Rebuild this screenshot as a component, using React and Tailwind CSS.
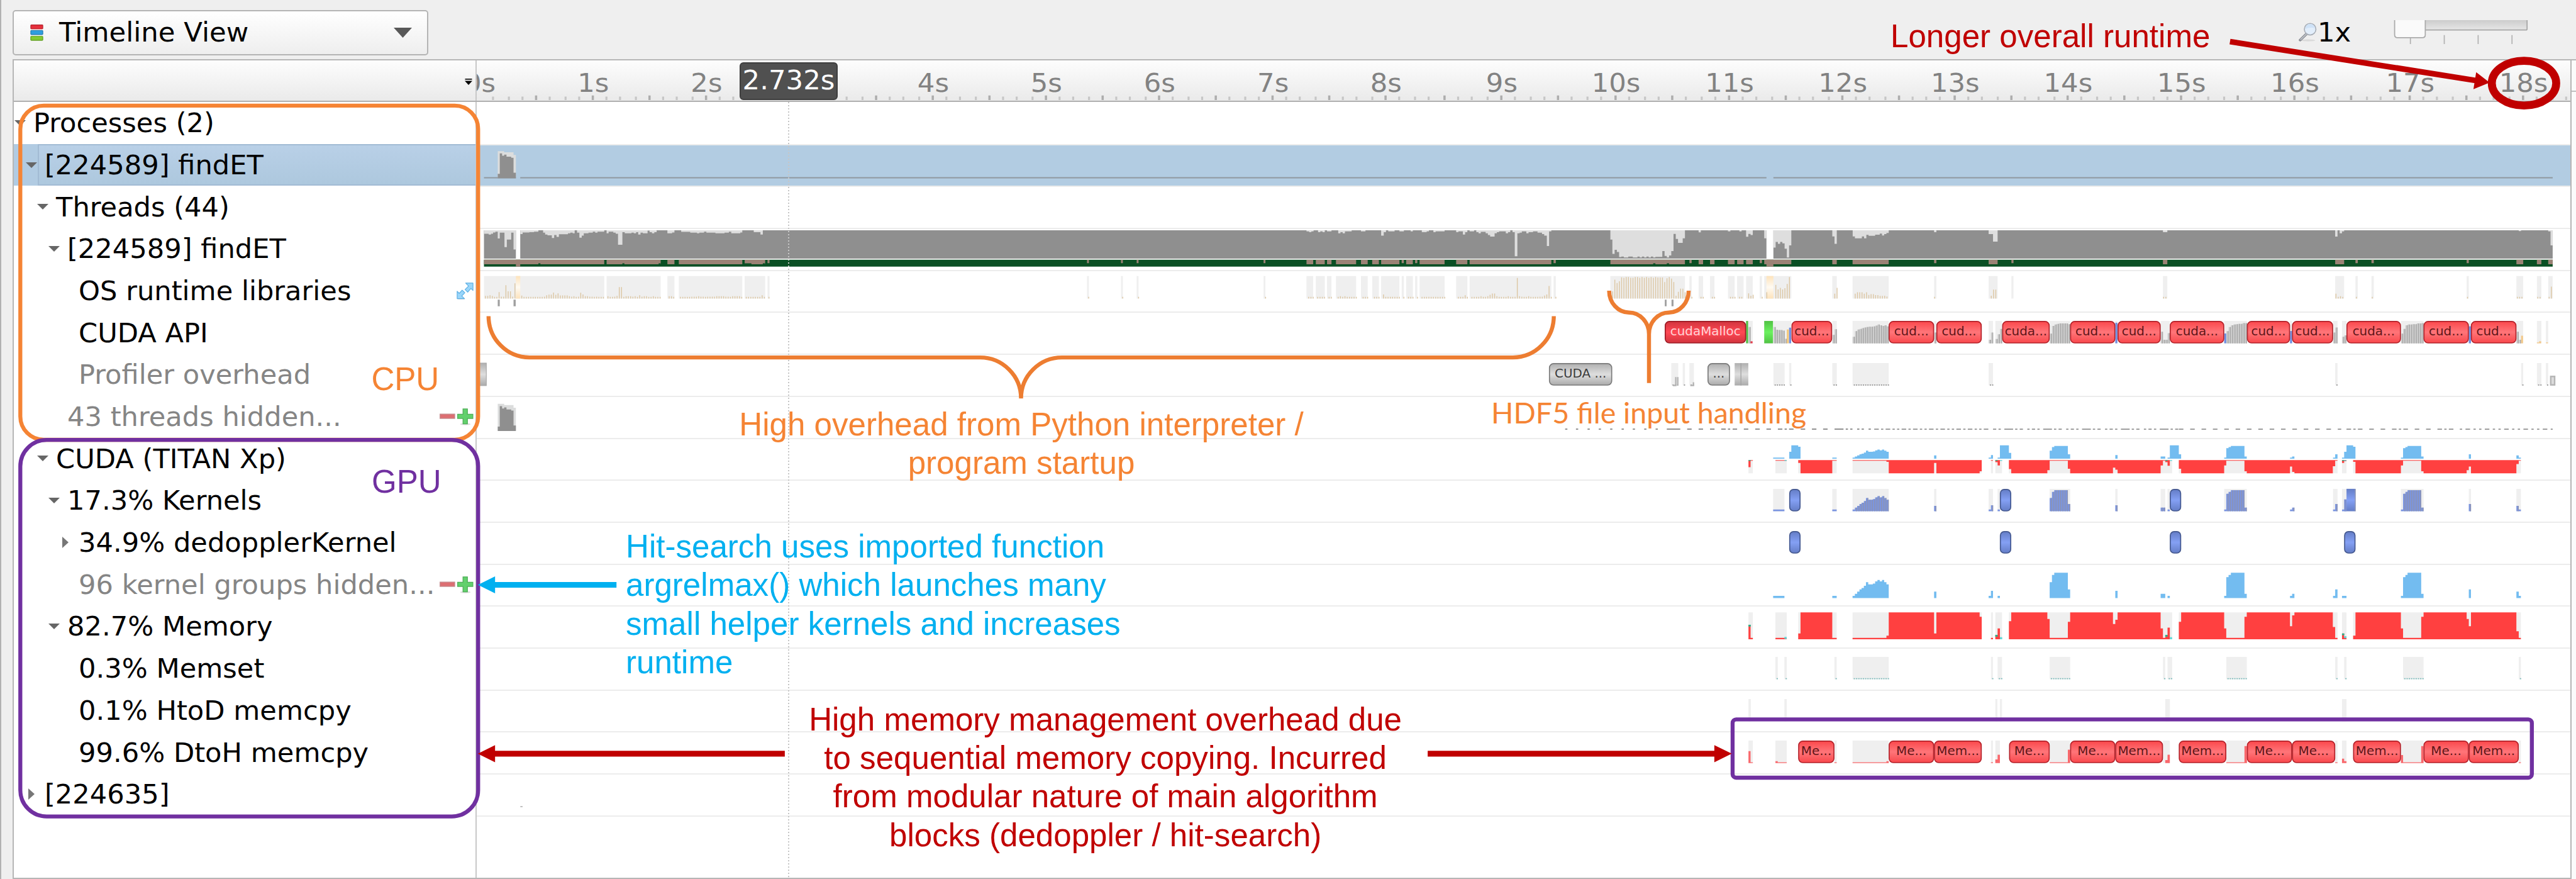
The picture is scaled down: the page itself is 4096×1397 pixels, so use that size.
import React from "react";

const ROW_H = 71.65;
const X0 = 814;
const TRACK_W = 3577.5;
const CELL = 3.875;

/* The capture is stored in sections; each one has its own origin and resolution. */
const A = (v) => 800 + v / 1.742;
const B = (v) => 1700 + v / 1.568;
const C = (v) => 2600 + v / 2.6133;
const D = (v) => 2900 + v / 2.8;
const E = (v) => 3400 + v / 2.8;
const F = (v) => 3900 + v / 3;

/* [start, level, start, level, ..., end] -> [{x0, x1, v}] with v in 0..1 */
const steps = (map, top, span, flat) => {
  const out = [];
  for (let i = 0; i + 2 < flat.length; i += 2) {
    if (flat[i + 1] === null) continue;
    out.push({ x0: map(flat[i]), x1: map(flat[i + 2]), v: (flat[i + 1] - top) / span });
  }
  return out;
};
const ranges = (map, flat) => {
  const out = [];
  for (let i = 0; i < flat.length; i += 2) out.push([map(flat[i]), map(flat[i + 1])]);
  return out;
};

/* Idle share of the main thread */
const idle = [
  ...steps(A, 702, 108, [46, 715, 60, 718, 67, 715, 73, 710, 80, 707, 87, 733, 93, 711, 107, 766, 114, 737, 127, 711, 134, 775, 141, null, 154, 716, 161, 710, 181, 709, 195, 707, 208, 702, 222, 711, 228, 718, 235, 721, 248, 731, 255, 720, 262, 727, 269, 717, 296, 713, 303, 711, 310, 713, 316, 702, 323, 711, 330, 730, 337, 722, 343, 713, 357, 711, 370, 707, 377, 711, 384, 707, 404, 702, 411, 713, 417, 707, 431, 711, 438, 715, 445, 757, 458, 709, 465, 713, 485, 711, 492, 713, 499, 709, 505, 718, 512, 711, 519, 713, 533, 703, 539, 709, 546, 713, 553, 709, 560, 702, 592, 713, 606, 710, 613, 702, 633, 708, 660, 711, 680, 713, 687, 711, 701, 707, 708, 711, 735, 713, 762, 711, 775, 707, 782, 713, 809, 710, 815, 702, 849, 709, 869, 718, 876, 702, 1567.8]),
  ...steps(B, 702, 108, [0, 702, 834, 706, 841, 709, 847, 706, 853, 702, 865, 709, 871, 706, 877, 709, 883, 702, 889, 706, 901, 702, 919, 713, 925, 709, 931, 713, 937, 706, 955, 702, 980, 706, 992, 702, 1034, 722, 1041, 709, 1047, 702, 1053, 706, 1070, 702, 1083, 706, 1095, 702, 1113, 706, 1119, 702, 1143, 709, 1156, 706, 1162, 702, 1174, 709, 1180, 706, 1204, 702, 1235, 709, 1241, 706, 1253, 718, 1259, 709, 1265, 702, 1271, 706, 1283, 702, 1289, 709, 1295, 713, 1301, 708, 1314, 713, 1320, 720, 1326, 726, 1338, 713, 1344, 709, 1350, 706, 1368, 713, 1374, 709, 1380, 702, 1386, 709, 1392, 801, 1399, 713, 1405, 711, 1411, 706, 1423, 713, 1429, 709, 1441, 706, 1453, 711, 1465, 716, 1471, 722, 1478, 762, 1484, 706, 1490, 702, 1568]),
  ...steps(C, 99, 145, [261.3, 99, 395, 146, 404, 220, 414, 199, 424, 210, 434, 236, 444, 233, 455, 238, 475, 233, 495, 238, 516, 233, 526, 238, 536, 233, 546, 238, 556, 233, 566, 238, 576, 233, 586, 238, 596, 235, 627, 205, 637, 230, 647, 238, 657, 228, 667, 205, 677, 117, 687, 143, 697, 163, 718, 140, 728, 99, 789, 109, 799, 99, 920, 104, 931, 99, 971, 104, 981, 99, 1001, 132, 1011, 117, 1021, 123, 1031, 99, 1082, 140, 1092, null, 1123, 187, 1133, 158, 1143, 168, 1153, 158, 1163, 166, 1173, 193, 1183, 238, 1193, 176, 1203, 99, 1386, 130, 1396, 168, 1406, 99, 1477, 130, 1487, 140, 1518, 130, 1528, 140, 1538, 122, 1548, 127, 1568]),
  ...steps(D, 55, 77.5, [840, 70, 850, 67, 872, 64, 883, 69, 893, 65, 904, 62, 915, 55, 1132, 60, 1143, 55, 1393, 65, 1414, 86, 1436, 55, 1568]),
  ...steps(E, 55, 77.5, [168, 55, 827, 60, 848, 55, 1568]),
  ...steps(F, 55, 77.5, [180, 55, 269, 72, 281, 55, 292, 63, 304, 58, 315, 55, 1210, 57, 1222, 55, 1361, 58, 1373, 96, 1384]),
];

const LEFT_EDGE = A(46);
const RIGHT_EDGE = F(1384);
const GAPS = [[A(141), A(154)], [C(1092), C(1123)]];

/* Spans in which OS runtime calls were recorded */
const osSpans = [
  ...ranges(A, [46, 404, 411, 572, 592, 613, 626, 815, 822, 883, 890, 896]),
  ...ranges(B, [246, 251, 337, 342, 379, 384, 719, 724, 834, 852, 859, 883, 889, 901, 913, 967, 980, 998, 1010, 1028, 1034, 1083, 1089, 1095, 1101, 1119, 1125, 1131, 1137, 1204, 1235, 1265, 1271, 1490, 1496, 1502]),
  ...ranges(C, [395, 728, 748, 758, 789, 809, 840, 860, 920, 950, 961, 990, 1001, 1031, 1062, 1072, 1082, 1203, 1386, 1406]),
  ...ranges(D, [742, 915, 1132, 1143, 1393, 1436, 1502, 1512]),
  ...ranges(E, [827, 848]),
  ...ranges(F, [269, 315, 373, 385, 455, 467, 943, 954, 1198, 1233, 1303, 1326, 1361, 1384]),
];

/* GPU load of the helper kernels, and of dedopplerKernel */
const kernelLoad = [
  ...steps(D, 690, -37, [362, 687, 416, null, 645, 687, 666, null, 742, 687, 753, 684, 764, 681, 775, 678, 785, 676, 796, 673, 806, 668, 817, 671, 839, 670, 850, 667, 861, 665, 872, 667, 883, 665, 893, 668, 904, 671, 915, null, 1132, 681, 1143, null, 1393, 687, 1404, 680, 1414, null, 1436, 687, 1447]),
  ...steps(E, 690, -37, [285, 668, 296, 658, 307, 655, 372, 678, 383, null, 599, 680, 610, null, 816, 684, 838, null, 849, 687, 860, null, 1120, 687, 1130, 661, 1141, 658, 1152, 655, 1217, 684, 1228, null, 1435, 687, 1445, 684, 1456]),
  ...steps(F, 690, -37, [258, 687, 269, 678, 281, null, 304, 687, 327, null, 606, 687, 617, 661, 629, 658, 640, 655, 710, 684, 722, null, 954, 678, 965, null, 1198, 681, 1210, 687, 1221]),
];
const dedopplerLoad = [
  ...steps(D, 690, -37, [439, 671, 449, 653, 482, 657, 493, null, 1447, 653, 1490, 674, 1501]),
  ...steps(E, 690, -37, [860, 653, 903, 678, 914]),
  ...steps(F, 690, -37, [315, 671, 327, 653, 361, 657, 373]),
];
const kernelSpans = [
  ...ranges(D, [362, 416, 645, 666, 742, 915, 1132, 1143, 1393, 1414, 1436, 1447]),
  ...ranges(E, [285, 383, 599, 610, 816, 838, 849, 860, 1120, 1228]),
  ...ranges(F, [258, 281, 304, 327, 606, 722, 954, 965, 1198, 1221]),
];

const memoryLoad = [
  ...steps(D, 694, 37, [244, 714, 254, 696, 265, null, 373, 696, 427, null, 482, 702, 493, 731, 645, 696, 666, null, 742, 696, 904, 699, 915, 731, 1132, 702, 1143, 731, 1350, 725, 1360, null, 1404, 696, 1414, null, 1425, 700, 1436, 709, 1447, null, 1490, 719, 1501]),
  ...steps(E, 694, 37, [101, 731, 274, 722, 285, 696, 372, 718, 383, 731, 588, 715, 599, 721, 610, 731, 816, 709, 827, 696, 838, 700, 849, 710, 860, null, 903, 718, 914, 731, 1120, 709, 1130, 696, 1217, 725, 1228, 731, 1435, 712, 1445, 727, 1456, 731, 1568]),
  ...steps(F, 694, 37, [180, 731, 257, 711, 269, 696, 281, null, 304, 702, 315, 697, 327, null, 361, 699, 373, 731, 606, 709, 617, 696, 710, 725, 722, 731, 943, 722, 954, 712, 965, 731, 1198, 705, 1210, 696, 1221]),
];
const memorySpans = [
  ...ranges(D, [244, 265, 373, 427, 482, 493, 645, 666, 742, 915, 1132, 1143, 1350, 1360, 1404, 1414, 1425, 1457, 1490, 1501]),
  ...ranges(E, [274, 383, 588, 610, 816, 871, 903, 914, 1120, 1228, 1435, 1456]),
  ...ranges(F, [257, 281, 304, 327, 361, 373, 606, 722, 943, 965, 1198, 1221]),
];
const hostCopyTicks = [
  [D(244), 1], [D(416), 0], [D(1425), 1], [D(1447), 0], [E(838), 1], [E(860), 0], [F(304), 1], [F(315), 0],
];

const apiSpans = [
  ...ranges(C, [1001, 1031, 1082, 1203, 1386, 1406]),
  ...ranges(D, [742, 915, 1132, 1143, 1393, 1414, 1425, 1457]),
  ...ranges(E, [285, 383, 599, 609, 816, 860, 1120, 1229, 1435, 1445]),
  ...ranges(F, [258, 281, 304, 327, 606, 722, 954, 965, 1198, 1233, 1303, 1326, 1349, 1361]),
];
const apiBars = [
  ...steps(C, 680, -115, [1011, 596, 1021, null, 1123, 596, 1133, 610, 1143, 612, 1163, 615, 1173, 657, 1183, null, 1386, 637, 1396, 608, 1406]),
  ...steps(D, 370, -62, [742, 352, 753, 336, 764, 332, 775, 330, 785, 328, 796, 326, 806, 325, 817, 324, 839, 323, 850, 321, 861, 318, 872, 320, 883, 322, 893, 320, 904, 323, 915, null, 1132, 340, 1143, null, 1393, 360, 1404, 340, 1414, null, 1425, 358, 1436, 345, 1447, 330, 1457]),
  ...steps(E, 370, -62, [285, 343, 296, 322, 307, 318, 318, 316, 329, 315, 372, 317, 383, null, 816, 338, 827, 360, 849, 342, 860, null, 1130, 336, 1141, 325, 1152, 320, 1163, 318, 1174, 317, 1185, 316, 1207, 314, 1229]),
  ...steps(F, 370, -62, [258, 340, 269, 326, 281, null, 304, 352, 315, 348, 327, null, 606, 343, 617, 330, 629, 320, 640, 318, 664, 317, 687, 315, 710, 314, 722, null, 1198, 338, 1210, 360, 1222]),
];
const apiMarks = [
  { x0: C(1001), x1: C(1010), v: 1, c: "#4fc044" },
  { x0: C(1021), x1: C(1030), v: 0.09, c: "#e23b4a" },
  { x0: C(1183), x1: C(1192), v: 0.62, c: "#f6c877" },
  { x0: C(1193), x1: C(1202), v: 0.7, c: "#6f8fe0" },
  { x0: E(599), x1: E(609), v: 0.92, c: "#6f8fe0" },
  { x0: E(1120), x1: E(1130), v: 0.44, c: "#6f8fe0" },
  { x0: E(1435), x1: E(1445), v: 0.55, c: "#6f8fe0" },
  { x0: F(954), x1: F(965), v: 0.76, c: "#6f8fe0" },
  { x0: F(1222), x1: F(1232), v: 0.34, c: "#f3c98a" },
  { x0: F(1303), x1: F(1314), v: 0.04, c: "#f3c98a" },
  { x0: F(1314), x1: F(1325), v: 0.09, c: "#f3c98a" },
  { x0: F(1350), x1: F(1360), v: 0.04, c: "#f3c98a" },
];
const apiCalls = [
  [C(1204), C(1385), "cud..."],
  [D(915), D(1132), "cud..."],
  [D(1143), D(1360), "cud..."],
  [E(58), E(285), "cuda..."],
  [E(383), E(599), "cud..."],
  [E(610), E(816), "cud..."],
  [E(860), E(1120), "cuda..."],
  [E(1229), E(1435), "cud..."],
  [F(48), F(258), "cud..."],
  [F(327), F(606), "cuda..."],
  [F(722), F(954), "cud..."],
  [F(965), F(1198), "cud..."],
];

const overheadSpans = [
  ...ranges(C, [667, 698, 718, 728, 748, 768, 1123, 1173, 1193, 1203, 1386, 1406]),
  ...ranges(D, [742, 915, 1393, 1414]),
  ...ranges(F, [269, 281, 1222, 1233, 1303, 1326, 1349, 1361]),
];
const memsetSpans = [
  ...ranges(D, [373, 384, 416, 427, 655, 666, 742, 915, 1404, 1414, 1436, 1457]),
  ...ranges(E, [285, 383, 827, 838, 849, 871, 1130, 1228]),
  ...ranges(F, [269, 281, 315, 327, 617, 722, 1210, 1221]),
];
const dtohSpans = [
  ...ranges(D, [244, 265, 373, 427, 655, 666, 742, 915, 1404, 1414, 1425, 1447]),
  ...ranges(E, [285, 383, 827, 860, 1130, 1229]),
  ...ranges(F, [269, 281, 304, 327, 606, 722, 1210, 1221]),
];
const dtohBars = [
  ...steps(D, 1540, -62, [244, 1507, 254, 1538, 265, null, 373, 1535, 384, 1538, 427, null, 655, 1538, 666, null, 742, 1538, 904, 1535, 915, null, 1404, 1538, 1414, null, 1425, 1530, 1436, 1517, 1447]),
  ...steps(E, 1540, -62, [285, 1538, 372, 1503, 383, null, 838, 1532, 849, 1517, 860, null, 1130, 1538, 1217, 1493, 1229]),
  ...steps(F, 1540, -62, [269, 1538, 281, null, 304, 1528, 315, 1535, 327, null, 606, 1518, 617, 1538, 710, 1493, 722, null, 1210, 1538, 1221]),
];
const dtohCopies = [
  [D(482), D(655), "Me..."],
  [D(915), D(1132), "Me..."],
  [D(1132), D(1360), "Mem..."],
  [E(91), E(285), "Me..."],
  [E(383), E(599), "Me..."],
  [E(599), E(827), "Mem..."],
  [E(903), E(1130), "Mem..."],
  [E(1229), E(1445), "Me..."],
  [F(48), F(269), "Me..."],
  [F(361), F(606), "Mem..."],
  [F(722), F(954), "Me..."],
  [F(954), F(1210), "Mem..."],
];

const up = (list, base, h) =>
  list.map((s) => `M${s.x0.toFixed(2)} ${base}V${(base - s.v * h).toFixed(2)}H${s.x1.toFixed(2)}V${base}Z`).join("");
const down = (list, base, h) =>
  list.map((s) => `M${s.x0.toFixed(2)} ${base}V${(base + s.v * h).toFixed(2)}H${s.x1.toFixed(2)}V${base}Z`).join("");
const slab = (list, y0, y1) =>
  list.map(([a, b]) => `M${a.toFixed(2)} ${y0}H${b.toFixed(2)}V${y1}H${a.toFixed(2)}Z`).join("");
const cells = (list, base, h, minH = 0) => {
  let d = "";
  list.forEach((s) => {
    for (let x = s.x0; x < s.x1 - 1; x += CELL) {
      d += `M${(x + CELL - 0.8).toFixed(2)} ${base}V${(base - Math.max(minH, s.v * h)).toFixed(2)}`;
    }
  });
  return d;
};
const spanCells = (spans) => spans.map(([x0, x1]) => ({ x0, x1, v: 0 }));

const Track = ({ children }) => (
  <svg className="block h-full w-full" viewBox={`${X0} 0 ${TRACK_W} ${ROW_H}`} preserveAspectRatio="none">
    {children}
  </svg>
);

const Slabs = ({ spans, y0 = 16, y1 = 54.3, fill = "#efefef" }) => <path d={slab(spans, y0, y1)} fill={fill} />;

const Pill = ({ x0, x1, label, fill = "url(#redPill)", stroke = "#b3222a", text = "#5e1518", y = 16.3, h = 38.2, r = 7 }) => (
  <g>
    <rect x={x0 + 0.8} y={y + 0.8} width={x1 - x0 - 1.6} height={h - 1.6} rx={r} fill={fill} stroke={stroke} strokeWidth="1.8" />
    {label && (
      <text x={(x0 + x1) / 2} y={y + 24.8} textAnchor="middle" fontSize="21.4" fill={text} fontFamily="'DejaVu Sans', sans-serif">
        {label}
      </text>
    )}
  </g>
);

const Blobs = ({ spans }) =>
  spans.map(([a, b]) => <Pill key={a} x0={a} x1={b} fill="url(#bluePill)" stroke="#44588f" r={6.5} />);

const burst = (dy) => (
  <g>
    <path d={`M${A(87)} ${57.3 + dy}V${12 + dy}H${A(106)}V${14 + dy}H${A(134)}V${18.5 + dy}H${A(141)}V${57.3 + dy}Z`} fill="#dcdddd" />
    <path
      d={`M${A(87)} ${58.4 + dy}V${50.8 + dy}H${A(93)}V${15.8 + dy}H${A(100)}V${20 + dy}H${A(106)}V${18 + dy}H${A(113)}V${21.5 + dy}H${A(127)}V${23.5 + dy}H${A(134)}V${49 + dy}H${A(141)}V${58.4 + dy}Z`}
      fill="#8f8f8f"
    />
  </g>
);

const ProcessTrack = () => (
  <Track>
    <path d={`M${LEFT_EDGE} 57.4H${A(141)}M${A(154)} 57.4H${C(1092)}M${C(1123)} 57.4H${RIGHT_EDGE}`} stroke="#8f989f" strokeWidth="2.2" />
    {burst(0)}
  </Track>
);

const ThreadTrack = () => {
  const top = 4.4;
  const full = 48.3;
  const [g1, g2] = GAPS;
  return (
    <Track>
      <path d={slab([[LEFT_EDGE, g1[0]], [g1[1], g2[0]], [g2[1], RIGHT_EDGE]], top, top + full)} fill="#8f8f8f" />
      <path d={down(idle.filter((s) => s.v > 0), top, full)} fill="#dedede" />
      <path d={slab([[LEFT_EDGE, RIGHT_EDGE]], 54.6, 66.3)} fill="#0a4f24" />
      <path d={slab(osSpans.filter(([a, b]) => b - a > 5), 54.6, 62.4)} fill="#9b8275" />
      <path d={slab(osSpans.filter(([a, b]) => b - a <= 5), 54.6, 60.4)} fill="#9b8275" />
      <path d={slab(GAPS, 54.6, 66.3)} fill="#9b8275" />
      <path d={slab([[A(208), A(214)], [A(458), A(464)], [A(566), A(572)], [A(822), A(842)], [A(876), A(883)], [C(586), C(596)], [C(647), C(657)]], 60.6, 62.6)} fill="#0a4f24" />
    </Track>
  );
};

const osSpikes = () => {
  let d = "";
  for (let x = LEFT_EDGE; x < RIGHT_EDGE; x += CELL) {
    const m = x + CELL / 2;
    if (!osSpans.some(([a, b]) => m > a && m < b)) continue;
    if (GAPS.some(([a, b]) => m > a && m < b)) continue;
    const s = idle.find((p) => m >= p.x0 && m < p.x1);
    const h = Math.max(3, (s ? s.v : 0) * 38.5);
    d += `M${(x + 2.6).toFixed(2)} 48.9V${(48.9 - h).toFixed(2)}`;
  }
  return d;
};

const OsTrack = () => (
  <Track>
    <Slabs spans={osSpans} y0={10.4} y1={48.9} />
    {GAPS.map(([a, b]) => (
      <rect key={a} x={a} y="10.4" width={b - a} height="38.5" fill="url(#sandCell)" />
    ))}
    <path d={osSpikes()} stroke="#dcc6a2" strokeWidth="1.5" />
    <path d={slab([[A(87), A(93)], [A(134), A(140.5)], [C(638), C(646)], [C(668), C(677)]], 50.7, 62)} fill="#a0a0a0" />
  </Track>
);

const ApiTrack = () => (
  <Track>
    <Slabs spans={apiSpans} />
    <path d={up(apiBars, 54.4, 38.2)} fill="#cfcfcf" />
    <path d={cells(apiBars, 54.4, 38.2)} stroke="#a9a9a9" strokeWidth="1.7" />
    {apiMarks.map((m) => (
      <rect key={m.x0} x={m.x0} width={m.x1 - m.x0} y={54.4 - m.v * 38.2} height={m.v * 38.2} fill={m.c} />
    ))}
    <rect x={C(1082)} y="16.2" width={C(1121) - C(1082)} height="38.2" fill="url(#greenCell)" />
    <Pill x0={C(638)} x1={C(1001)} label="cudaMalloc" fill="url(#crimsonPill)" stroke="#9c1a24" text="#ffd3d6" />
    {apiCalls.map(([a, b, t]) => (
      <Pill key={a} x0={a} x1={b} label={t} />
    ))}
  </Track>
);

const OverheadTrack = () => (
  <Track>
    <Slabs spans={overheadSpans} />
    <path d={cells(spanCells(overheadSpans), 54.6, 0, 2)} stroke="#8f8f8f" strokeWidth="2" />
    <rect x={X0} y="16.2" width={A(53) - X0} height="38.4" fill="url(#greyPill)" stroke="#a6a6a6" strokeWidth="1.2" />
    <path d={`M${C(687)} 40V54.4H${C(674)}M${C(696)} 40V54.4M${C(766)} 49V54.4H${C(752)}`} stroke="#b3b3b3" strokeWidth="2.4" fill="none" />
    <Pill x0={C(121)} x1={C(403)} label="CUDA ..." fill="url(#greyPill)" stroke="#7a7a7a" text="#3b3b3b" />
    <Pill x0={C(829)} x1={C(929)} label="..." fill="url(#greyPill)" stroke="#7a7a7a" text="#3b3b3b" />
    <rect x={C(950)} y="16.2" width={C(1011) - C(950)} height="38.2" fill="url(#greyPill)" />
    <path d={`M${C(978)} 16.2V54.4`} stroke="#a2a2a2" strokeWidth="1.4" />
    <rect x={F(1374)} y="39" width={(1394 - 1374) / 3} height="14.4" fill="#dcdcdc" stroke="#b5b5b5" strokeWidth="2.6" />
  </Track>
);

const HiddenThreadsTrack = () => {
  const dots = [
    [B(1527), B(1533)], [B(1556), B(1562)],
    ...ranges(C, [293, 303, 343, 353, 394, 404, 445, 455, 495, 505, 546, 556, 597, 607, 647, 707, 738, 758, 789, 809, 840, 860, 890, 910, 920, 930, 941, 961, 991, 1011, 1042, 1062, 1092, 1112, 1143, 1163, 1173, 1183, 1193, 1213, 1245, 1265, 1295, 1315, 1345, 1365, 1396, 1436, 1446, 1456, 1466, 1476, 1497, 1507, 1517, 1527, 1548, 1558]),
  ];
  return (
    <Track>
      {burst(1.8)}
      <path d={slab(dots, 56, 57.9)} fill="#929292" />
      <g stroke="#929292" strokeWidth="1.9">
        <path d={`M3202 57H${E(0)}`} strokeDasharray="7.8 3.9 3.9 3.9 7.8 3.9 3.9 3.9 3.9 3.9" />
        <path d={`M${E(14)} 57H${E(900)}`} strokeDasharray="5.5 3.9 3.9 6 15 3.5 3.9 3.9 5.5 7.5 3.9 3.9" />
        <path d={`M${E(903)} 57H${F(300)}`} strokeDasharray="7.8 11.6" />
        <path d={`M${F(327)} 57H${F(900)}`} strokeDasharray="7.8 3.9 3.9 3.9 7.8 11.6 7.8 11.6 7.8 11.6" />
        <path d={`M${F(908)} 57H${RIGHT_EDGE}`} strokeDasharray="3.9 5.8 7.8 5.8 3.9 5.8" />
      </g>
    </Track>
  );
};

const GpuTrack = () => (
  <Track>
    <path d={up([...kernelLoad, ...dedopplerLoad], 35.4, 22.9)} fill="#73bcf0" />
    <path d={slab(memorySpans, 37.8, 60.4)} fill="#efefef" />
    <path d={down(memoryLoad, 37.8, 22.7)} fill="#ff4040" />
    {hostCopyTicks.map(([x, g]) => (
      <rect key={x} x={x} y="37.8" width="3.9" height="1.4" fill={g ? "#27b58c" : "#5fd6d6"} />
    ))}
  </Track>
);

const KernelsTrack = () => (
  <Track>
    <Slabs spans={kernelSpans} />
    <path d={up(kernelLoad, 54.3, 38.2)} fill="#7b95e0" />
    <path d={cells(kernelLoad.filter((s) => s.v > 0.12), 54.3, 38.2)} stroke="#8c93b4" strokeWidth="1.7" />
    <Blobs spans={[...ranges(D, [439, 493]), ...ranges(E, [47, 101, 860, 914])]} />
    <rect x={F(315)} y="34" width="4" height="20.3" fill="#7b8fd0" />
    <rect x={F(327)} y="16" width={46 / 3} height="38.3" fill="url(#bluePill)" />
    <path d={`M${F(372)} 16V54.3`} stroke="#8f96ad" strokeWidth="1.4" />
  </Track>
);

const DedopplerTrack = () => (
  <Track>
    <Blobs spans={[...ranges(D, [439, 493]), ...ranges(E, [47, 101, 860, 914]), ...ranges(F, [315, 373])]} />
  </Track>
);

const HiddenKernelsTrack = () => (
  <Track>
    <path d={up(kernelLoad, 58.6, 45.8)} fill="#73bcf0" />
  </Track>
);

const MemoryTrack = () => (
  <Track>
    <path d={slab(memorySpans, 12.2, 58)} fill="#efefef" />
    <path d={up(memoryLoad, 58, 45.8)} fill="#ff4040" />
    {hostCopyTicks.map(([x, g]) => {
      const s = memoryLoad.find((p) => x + 1 >= p.x0 && x + 1 < p.x1);
      const h = s ? s.v * 45.8 : 2;
      return <rect key={x} x={x} y={g ? 58 - h : 58 - h - 1.5} width="3.9" height={g ? 3 : 3.4} fill={g ? "#27b58c" : "#5fd6d6"} />;
    })}
  </Track>
);

const MemsetTrack = () => (
  <Track>
    <Slabs spans={memsetSpans} />
    <path d={cells(spanCells(memsetSpans), 54.3, 0, 1.8)} stroke="#7fbcbc" strokeWidth="2.3" />
  </Track>
);

const HtodTrack = () => (
  <Track>
    <Slabs spans={[...ranges(D, [244, 255, 416, 427, 1425, 1435, 1447, 1457]), ...ranges(E, [838, 860]), ...ranges(F, [304, 327])]} />
  </Track>
);

const DtohTrack = () => (
  <Track>
    <Slabs spans={dtohSpans} />
    <path d={up(dtohBars, 54.4, 38.2)} fill="#f9686c" />
    {dtohCopies.map(([a, b, t]) => (
      <Pill key={a} x0={a} x1={b} label={t} />
    ))}
  </Track>
);

const OtherProcessTrack = () => (
  <Track>
    <rect x="888.5" y="56" width="3.9" height="1.8" fill="#b5b5b5" />
  </Track>
);

const ROWS = [
  { level: 0, arrow: "down", label: "Processes (2)" },
  { level: 1, arrow: "down", label: "[224589] findET", selected: true, track: ProcessTrack },
  { level: 2, arrow: "down", label: "Threads (44)" },
  { level: 3, arrow: "down", label: "[224589] findET", track: ThreadTrack },
  { level: 4, label: "OS runtime libraries", tool: "expand", track: OsTrack },
  { level: 4, label: "CUDA API", track: ApiTrack },
  { level: 4, label: "Profiler overhead", muted: true, track: OverheadTrack },
  { level: 3, label: "43 threads hidden...", muted: true, tool: "plusminus", track: HiddenThreadsTrack },
  { level: 2, arrow: "down", label: "CUDA (TITAN Xp)", track: GpuTrack },
  { level: 3, arrow: "down", label: "17.3% Kernels", track: KernelsTrack },
  { level: 4, arrow: "right", label: "34.9% dedopplerKernel", track: DedopplerTrack },
  { level: 4, label: "96 kernel groups hidden...", muted: true, tool: "plusminus", track: HiddenKernelsTrack },
  { level: 3, arrow: "down", label: "82.7% Memory", track: MemoryTrack },
  { level: 4, label: "0.3% Memset", track: MemsetTrack },
  { level: 4, label: "0.1% HtoD memcpy", track: HtodTrack },
  { level: 4, label: "99.6% DtoH memcpy", track: DtohTrack },
  { level: 1, arrow: "right", label: "[224635]", track: OtherProcessTrack },
];

const INDENT = ["w-0", "w-[18px]", "w-[36px]", "w-[54px]", "w-[72px]"];

const PlusMinus = () => (
  <svg className="h-[27px] w-[54px] shrink-0" viewBox="0 0 58 29">
    <ellipse cx="44" cy="27" rx="9" ry="1.6" fill="#dcdcdc" />
    <rect x="0.8" y="9.8" width="25" height="7.4" fill="#dd6e72" stroke="#c4898b" strokeWidth="1.4" />
    <path d="M40 1h7.500v9h9.300v7.300h-9.300v9.200h-7.500v-9.200h-9.200v-7.300h9.200z" fill="#62d06c" stroke="#4fae58" strokeWidth="1.4" />
  </svg>
);

const Expand = () => (
  <svg className="h-[27px] w-[27px] shrink-0" viewBox="0 0 29 29">
    <ellipse cx="8" cy="28" rx="7" ry="1" fill="#dcdcdc" />
    <g fill="#9ad6fa" stroke="#5fb0e4" strokeWidth="1.3" strokeLinejoin="round">
      <path d="M15.500 1H28V13.500L24.500 10L19 16.500L14.500 12L20.500 6Z" />
      <path d="M13.500 27.500H1V15L4.500 18.500L9.500 13L14 17.500L8.800 23Z" />
    </g>
  </svg>
);

const TreeRow = ({ row }) => (
  <div className={`relative flex h-[66.7px] items-center ${row.selected ? "bg-[#b1cbe2]" : ""}`}>
    <div className={`shrink-0 ${INDENT[row.level]}`} />
    <div className="flex h-full w-[20px] shrink-0 items-center justify-center">
      {row.arrow === "down" && (
        <svg className="h-[9px] w-[18px]" viewBox="0 0 18 9">
          <path d="M0 0H18L9 9Z" fill="#666" />
        </svg>
      )}
      {row.arrow === "right" && (
        <svg className="h-[18px] w-[10px]" viewBox="0 0 10 18">
          <path d="M0 0V18L10 9Z" fill="#777" />
        </svg>
      )}
    </div>
    <div
      className={`flex h-full min-w-0 grow items-center justify-between pl-[9px] pr-px pt-px ${
        row.selected ? "border-2 border-r-0 border-[#a2bbd4] bg-linear-to-b from-[#b9d0e7] to-[#adc8de]" : "border-2 border-transparent"
      }`}
    >
      <span className={`whitespace-pre text-[43.2px] leading-none ${row.muted ? "text-[#858585]" : "text-black"}`}>{row.label}</span>
      {row.tool === "plusminus" && <PlusMinus />}
      {row.tool === "expand" && <Expand />}
    </div>
  </div>
);

const TICKS = [818.6, 1012.4, 1205.9, 1399.6, 1593.3, 1786.7, 1980, 2173.9, 2367, 2564.8, 2760, 2954, 3147.5, 3339.5, 3532.5, 3726.3, 3920, 4117, 4310.7];

const Ruler = () => {
  const minor = [];
  const major = [];
  TICKS.forEach((x, i) => {
    const next = TICKS[i + 1] ?? x + 193.8;
    for (let k = 0; k < 8; k += 1) {
      const at = x + Math.round(((next - x) * k) / 8 / CELL) * CELL;
      if (at > 4388) continue;
      (k % 4 === 0 ? major : minor).push(at);
    }
  });
  return (
    <svg className="block h-full w-full" viewBox={`${X0} 0 ${TRACK_W} 73`} preserveAspectRatio="none">
      <path d={minor.map((x) => `M${x} 65.500V72`).join("")} stroke="#c6c6c6" strokeWidth="3.4" />
      <path d={major.filter((x) => x > 830).map((x) => `M${x} 63.500V72`).join("")} stroke="#adadad" strokeWidth="3.8" />
      {TICKS.map((x, i) =>
        i === 3 ? null : (
          <text key={x} x={x + 0.8} y="57" textAnchor="middle" fontSize="46.6" fill="#828282" fontFamily="'DejaVu Sans', sans-serif">
            {`${i}s`}
          </text>
        )
      )}
    </svg>
  );
};

const Gradients = () => (
  <svg className="absolute h-0 w-0">
    <defs>
      <linearGradient id="redPill" x1="0" y1="0" x2="0" y2="1">
        <stop offset="0" stopColor="#fb484c" />
        <stop offset="0.5" stopColor="#ff7579" />
        <stop offset="1" stopColor="#f9484c" />
      </linearGradient>
      <linearGradient id="crimsonPill" x1="0" y1="0" x2="0" y2="1">
        <stop offset="0" stopColor="#d2343e" />
        <stop offset="0.5" stopColor="#ff4854" />
        <stop offset="1" stopColor="#d2343e" />
      </linearGradient>
      <linearGradient id="greyPill" x1="0" y1="0" x2="0" y2="1">
        <stop offset="0" stopColor="#b0b0b0" />
        <stop offset="0.5" stopColor="#dedede" />
        <stop offset="1" stopColor="#ababab" />
      </linearGradient>
      <linearGradient id="bluePill" x1="0" y1="0" x2="0" y2="1">
        <stop offset="0" stopColor="#647dc6" />
        <stop offset="0.5" stopColor="#84a0f4" />
        <stop offset="1" stopColor="#647dc6" />
      </linearGradient>
      <linearGradient id="greenCell" x1="0" y1="0" x2="0" y2="1">
        <stop offset="0" stopColor="#51c244" />
        <stop offset="0.5" stopColor="#6bf15f" />
        <stop offset="1" stopColor="#51c244" />
      </linearGradient>
      <linearGradient id="sandCell" x1="0" y1="0" x2="0" y2="1">
        <stop offset="0" stopColor="#fde3bb" />
        <stop offset="0.5" stopColor="#fffaf2" />
        <stop offset="1" stopColor="#fde3bb" />
      </linearGradient>
    </defs>
  </svg>
);

const Toolbar = () => (
  <div className="flex h-[94px] items-start justify-between pl-[20px]">
    <button className="mt-[16px] flex h-[72px] w-[661px] items-center rounded-[5px] border-2 border-[#b4b4b4] bg-linear-to-b from-white to-[#eeeeee] pl-[26px] pr-[24px]">
      <svg className="h-[26px] w-[21px]" viewBox="0 0 22 28">
        <rect x="0.7" y="0.7" width="20.6" height="6.8" rx="1" fill="#e5303c" stroke="#b3202b" strokeWidth="1.2" />
        <rect x="0.7" y="10.3" width="20.6" height="6.8" rx="1" fill="#2f9fe0" stroke="#1f76ac" strokeWidth="1.2" />
        <rect x="0.7" y="20.2" width="20.6" height="6.8" rx="1" fill="#84cb32" stroke="#5c9a1c" strokeWidth="1.2" />
      </svg>
      <span className="ml-[25px] grow text-left text-[43.4px] leading-none text-black">Timeline View</span>
      <svg className="h-[16px] w-[29px]" viewBox="0 0 29 16">
        <path d="M0 0H29L14.5 16Z" fill="#585858" />
      </svg>
    </button>
    <div className="mr-[76px] flex items-start">
      <svg className="mt-[35px] h-[31px] w-[31px]" viewBox="0 0 33 33">
        <ellipse cx="17" cy="31" rx="12" ry="1.8" fill="#dadada" />
        <path d="M14.5 20L3.5 30.5" stroke="#8b8f96" strokeWidth="4.4" strokeLinecap="round" />
        <path d="M14 20.5L4.5 29.5" stroke="#c9ccd2" strokeWidth="1.6" strokeLinecap="round" />
        <circle cx="20.5" cy="12.2" r="9.8" fill="#e2eefb" stroke="#a9afb8" strokeWidth="1.8" />
        <path d="M12.5 12c3-2.500 12-3 16-1.500a8 8 0 0 0-16 1.500z" fill="#cfe2f7" />
      </svg>
      <span className="mt-[30px] w-[121px] text-[43.4px] leading-none text-black">1x</span>
      <svg className="mt-[32px] h-[39px] w-[214px]" viewBox="0 0 230 42">
        <path d="M28.5 25V41M86.5 25.5V41M144.5 25.5V41M202.5 25.5V41" stroke="#b0b0b0" strokeWidth="1.8" />
        <rect x="54" y="0" width="174" height="16.5" fill="url(#groove)" />
        <path d="M54 16.8H226.5Q228.3 16.8 228.3 15V0" fill="none" stroke="#a6a6a6" strokeWidth="1.9" />
        <path d="M1.5 0V25Q1.5 30 6.5 30H49Q54 30 54 25V0" fill="#fafafa" stroke="#aaaaaa" strokeWidth="1.9" />
        <defs>
          <linearGradient id="groove" x1="0" y1="0" x2="0" y2="1">
            <stop offset="0" stopColor="#cccccc" />
            <stop offset="1" stopColor="#e6e6e6" />
          </linearGradient>
        </defs>
      </svg>
    </div>
  </div>
);

const NOTE = "absolute whitespace-pre font-['Liberation_Sans',Arial,sans-serif] text-[51.1px] leading-[61.4px]";

const Annotations = () => (
  <div className="pointer-events-none absolute inset-0">
    <svg className="absolute inset-0 h-full w-full" viewBox="0 0 4400 1501" preserveAspectRatio="none" fill="none">
      <rect x="34.7" y="180.4" width="782" height="570.6" rx="40" stroke="#f58434" strokeWidth="6.8" />
      <rect x="34.7" y="751.2" width="782" height="643" rx="45" stroke="#7030a0" strokeWidth="6.8" />
      <rect x="2959.4" y="1228.5" width="1365.2" height="99.5" rx="6" stroke="#7030a0" strokeWidth="6.8" />
      <g stroke="#ed7d31" strokeWidth="6.9">
        <path d="M834.5 539.8A70 70.6 0 0 0 904.5 610.4H1674A70 70 0 0 1 1744 680.4A70 70 0 0 1 1814 610.4H2584A70 70.6 0 0 0 2654 539.8" />
        <path d="M2748.5 496.3A34 37.4 0 0 0 2782.5 533.7A34 37 0 0 1 2816.6 571V654V571A34 37 0 0 1 2850.5 533.7A34 37.4 0 0 0 2884.4 496.3" />
      </g>
      <ellipse cx="4311.2" cy="142" rx="55" ry="38.2" stroke="#c00000" strokeWidth="13.6" />
      <path d="M3809 71L4230 137.6" stroke="#c00000" strokeWidth="9.6" />
      <path d="M4229.5 123.2L4252.5 141L4224.8 152.2Z" fill="#c00000" />
      <path d="M843 998.7H1053" stroke="#00b0f0" strokeWidth="9.6" />
      <path d="M816.2 998.7L845.6 984.1V1013.3Z" fill="#00b0f0" />
      <path d="M843 1287H1340.5M2438.6 1287H2931" stroke="#c00000" strokeWidth="9.9" />
      <path d="M816.2 1287L845.6 1272.3V1301.7ZM2958 1287L2928.2 1272.3V1301.7Z" fill="#c00000" />
    </svg>
    <p className={`${NOTE} left-[3006px] top-[26.6px] text-[#c00000]`}>Longer overall runtime</p>
    <p className={`${NOTE} left-[590.4px] top-[572px] text-[#f58434]`}>CPU</p>
    <p className={`${NOTE} left-[591px] top-[735px] text-[#7030a0]`}>GPU</p>
    <p className={`${NOTE} left-[1124px] top-[643.9px] w-[1000px] text-center text-[#f58434]`}>{"High overhead from Python interpreter /\nprogram startup"}</p>
    <p className="absolute left-[2371px] top-[626.500px] whitespace-pre font-['Lato','Open_Sans',sans-serif] text-[46.5px] leading-[56px] text-[#f58434]">HDF5 file input handling</p>
    <p className={`${NOTE} left-[995px] top-[837.7px] text-[#00b0f0]`}>{"Hit-search uses imported function\nargrelmax() which launches many\nsmall helper kernels and increases\nruntime"}</p>
    <p className={`${NOTE} left-[1207.6px] top-[1112.6px] w-[1100px] text-center text-[#c00000]`}>{"High memory management overhead due\nto sequential memory copying. Incurred\nfrom modular nature of main algorithm\nblocks (dedoppler / hit-search)"}</p>
  </div>
);

export default function App() {
  return (
    <div className="relative h-[1397px] w-[4096px] overflow-hidden bg-[#efefef] font-['DejaVu_Sans',Verdana,sans-serif] shadow-[inset_2px_0_0_#b2b2b2]">
      <Gradients />
      <div className="flex h-full flex-col">
        <Toolbar />
        <div className="flex h-[1303px] pl-[20px]">
          <div className="relative flex w-[4069px] flex-col border-2 border-[#b6b6b6] bg-white">
            <div className="flex h-[66px] shrink-0 border-b-2 border-[#b0b0b0] bg-linear-to-b from-[#fdfdfd] to-[#eaeaea]">
              <div className="flex w-[736px] items-center justify-end border-r-2 border-[#c8c8c8] pr-[5px]">
                <svg className="mt-[4px] h-[10px] w-[12px]" viewBox="0 0 12 10">
                  <path d="M0.5 0.8H11.5" stroke="#000" strokeWidth="1.6" />
                  <path d="M0 3.4H12L6 10Z" fill="#000" />
                </svg>
              </div>
              <div className="relative min-w-0 grow">
                <Ruler />
                <div className="absolute left-[418px] top-[3px] flex h-[60px] w-[156px] items-center justify-center rounded-[6px] border-2 border-[#3e3e3e] bg-[#505050] pb-[2px] text-[43.4px] leading-none text-white">
                  2.732s
                </div>
              </div>
            </div>
            <div className="flex grow">
              <div className="w-[736px] shrink-0 border-r-2 border-[#c8c8c8]">
                {ROWS.map((row, i) => (
                  <TreeRow key={i} row={row} />
                ))}
              </div>
              <div className="relative min-w-0 grow">
                {ROWS.map((row, i) => (
                  <div key={i} className={`h-[66.7px] border-t-2 ${i === 0 ? "border-transparent" : "border-[#ececec]"} ${row.selected ? "bg-[#b2cce2]" : ""}`}>
                    <div className="-mt-[2px] h-[66.7px]">{row.track && <row.track />}</div>
                  </div>
                ))}
                <div className="border-t-2 border-[#ececec]" />
                <div className="absolute inset-y-0 left-[495px] w-[2px] bg-[repeating-linear-gradient(to_bottom,#c6c6c6_0,#c6c6c6_2px,transparent_2px,transparent_5px)]" />
              </div>
            </div>
          </div>
          <div className="flex grow flex-col border-t-2 border-[#b6b6b6] bg-[#fbfbfb]">
            <div className="h-[50px] shrink-0 border-b-2 border-[#c0c0c0]" />
          </div>
        </div>
      </div>
      <Annotations />
    </div>
  );
}
